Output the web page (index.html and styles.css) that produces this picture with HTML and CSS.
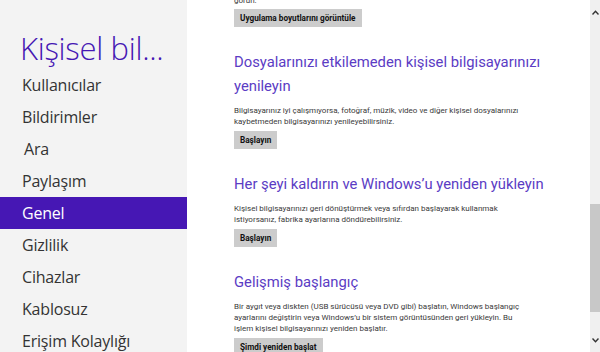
FILE: index.html
```html
<!DOCTYPE html>
<html lang="tr">
<head>
<meta charset="utf-8">
<link rel="stylesheet" href="styles.css">
</head>
<body>
<div class="app">
  <nav class="sidebar">
    <div class="title">Kişisel bil...</div>
    <ul class="menu">
      <li>Kullanıcılar</li>
      <li>Bildirimler</li>
      <li class="indent">Ara</li>
      <li>Paylaşım</li>
      <li class="active">Genel</li>
      <li>Gizlilik</li>
      <li>Cihazlar</li>
      <li>Kablosuz</li>
      <li>Erişim Kolaylığı</li>
    </ul>
  </nav>
  <main class="main">
    <div class="content">
      <p class="text cut">görün.</p>
      <button class="btn">Uygulama boyutlarını görüntüle</button>

      <section class="section">
        <h2 class="heading">Dosyalarınızı etkilemeden kişisel bilgisayarınızı<br>yenileyin</h2>
        <p class="text">Bilgisayarınız iyi çalışmıyorsa, fotoğraf, müzik, video ve diğer kişisel dosyalarınızı<br>kaybetmeden bilgisayarınızı yenileyebilirsiniz.</p>
        <button class="btn">Başlayın</button>
      </section>

      <section class="section">
        <h2 class="heading">Her şeyi kaldırın ve Windows’u yeniden yükleyin</h2>
        <p class="text">Kişisel bilgisayarınızı geri dönüştürmek veya sıfırdan başlayarak kullanmak<br>istiyorsanız, fabrika ayarlarına döndürebilirsiniz.</p>
        <button class="btn">Başlayın</button>
      </section>

      <section class="section">
        <h2 class="heading">Gelişmiş başlangıç</h2>
        <p class="text">Bir aygıt veya diskten (USB sürücüsü veya DVD gibi) başlatın, Windows başlangıç<br>ayarlarını değiştirin veya Windows’u bir sistem görüntüsünden geri yükleyin. Bu<br>işlem kişisel bilgisayarınızı yeniden başlatır.</p>
        <button class="btn">Şimdi yeniden başlat</button>
      </section>
    </div>
  </main>
  <div class="scrollbar">
    <div class="arrow up">
      <svg width="7" height="5" viewBox="0 0 7 5"><path d="M0.5 4.5 L3.5 1.2 L6.5 4.5" fill="none" stroke="#333" stroke-width="1.4"/></svg>
    </div>
    <div class="track">
      <div class="thumb"></div>
    </div>
    <div class="arrow down">
      <svg width="7" height="5" viewBox="0 0 7 5"><path d="M0.5 0.5 L3.5 3.8 L6.5 0.5" fill="none" stroke="#333" stroke-width="1.4"/></svg>
    </div>
  </div>
</div>
</body>
</html>
```

FILE: styles.css
```css
html, body {
  margin: 0;
  padding: 0;
  height: 352px;
  overflow: hidden;
  font-family: "Open Sans", "Noto Sans", "DejaVu Sans", sans-serif;
}

.app {
  display: flex;
  width: 600px;
  height: 352px;
  overflow: hidden;
}

.sidebar {
  width: 187px;
  flex: 0 0 187px;
  background: #f3f3f3;
  padding-top: 27px;
  box-sizing: border-box;
}

.title {
  font-size: 31px;
  line-height: 42px;
  font-weight: 300;
  color: #4617b4;
  padding-left: 20px;
  white-space: nowrap;
  letter-spacing: -0.3px;
}

.menu {
  list-style: none;
  margin: 0;
  padding: 0;
}

.menu li {
  height: 32px;
  line-height: 32px;
  padding-left: 22px;
  font-size: 16px;
  color: #333;
  letter-spacing: -0.2px;
}

.menu li.indent {
  padding-left: 24px;
}

.menu li.active {
  background: #4617b4;
  color: #fff;
}

.main {
  flex: 1;
  min-width: 0;
  background: #fff;
  padding-left: 47px;
  overflow: hidden;
}

.content {
  margin-top: -5px;
}

.text {
  margin: 0;
  font-family: Roboto, "Open Sans", sans-serif;
  font-size: 8px;
  line-height: 11px;
  color: #3a3a3a;
  white-space: nowrap;
}

.btn {
  display: block;
  margin: 3px 0 0;
  padding: 0 6px;
  height: 18px;
  border: none;
  background: #cccccc;
  color: #111;
  font-family: Roboto, "Open Sans", sans-serif;
  font-size: 8.2px;
  font-weight: 700;
  line-height: 18px;
  white-space: nowrap;
}

.section {
  margin-top: 22.5px;
}

.heading {
  margin: 0 0 7.5px;
  font-family: Roboto, "Open Sans", sans-serif;
  font-size: 14.8px;
  line-height: 24px;
  font-weight: 400;
  color: #5b3cc4;
  white-space: nowrap;
}

.section .text {
  margin-bottom: 0;
}

.section .btn {
  margin-top: 4px;
}

.scrollbar {
  width: 10px;
  flex: 0 0 10px;
  background: #f0f0f0;
  display: flex;
  flex-direction: column;
}

.arrow {
  height: 24px;
  display: flex;
  align-items: center;
  justify-content: center;
}

.track {
  flex: 1;
  padding-top: 180px;
}

.thumb {
  height: 108px;
  background: #c8c8c8;
}
```
